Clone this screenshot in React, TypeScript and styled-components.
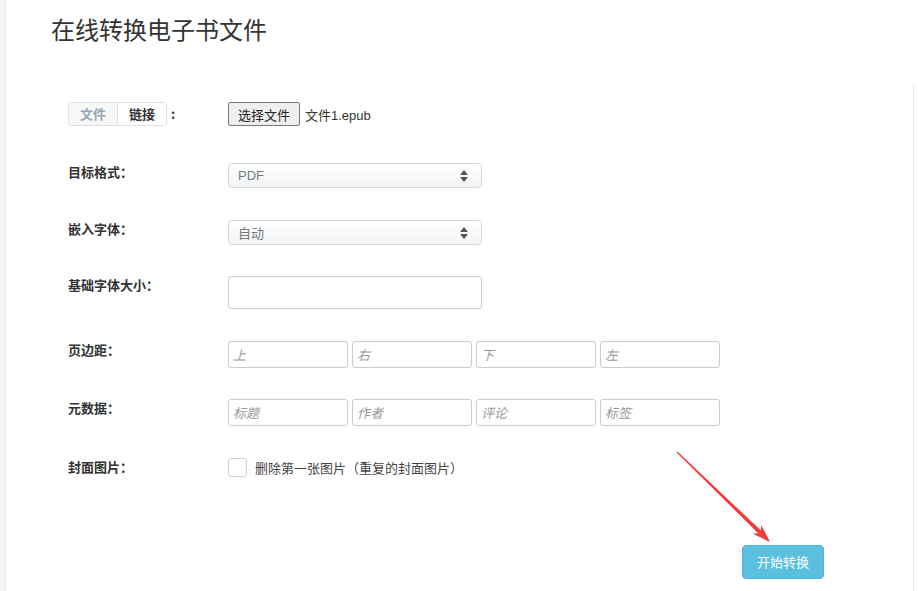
import styled, { createGlobalStyle } from 'styled-components'

const GlobalStyle = createGlobalStyle`
  html, body {
    margin: 0;
    padding: 0;
    background: #ffffff;
  }
  body {
    font-family: "Liberation Sans", "Noto Sans CJK SC", sans-serif;
    color: #333;
  }
`

const Page = styled.div`
  position: relative;
  display: flex;
  width: 923px;
  height: 591px;
  overflow: hidden;
  background: #fff;
`

const SideStrip = styled.div`
  width: 5px;
  flex-shrink: 0;
  background: #f4f4f4;
  border-right: 1px solid #e8e8e8;
`

const Main = styled.main`
  position: relative;
  flex: 1;
  padding: 14px 0 0 45px;
  margin-right: 9px;

  &::after {
    content: '';
    position: absolute;
    right: 0;
    top: 84px;
    bottom: 0;
    width: 1px;
    background: #ececec;
  }
`

const Title = styled.h1`
  margin: 0;
  font-family: "Noto Sans CJK SC", sans-serif;
  font-size: 24px;
  font-weight: 400;
  line-height: 30px;
  color: #333;
`

const Form = styled.form`
  display: flex;
  flex-direction: column;
  gap: 31.6px;
  width: 756px;
  margin: 58px 0 0 17px;
`

const Row = styled.div<{ $first?: boolean }>`
  display: grid;
  grid-template-columns: 160px 1fr;
  align-items: start;
  margin-bottom: ${p => (p.$first ? '5.4px' : '0')};
`

const Label = styled.label`
  font-family: "Noto Sans CJK SC", sans-serif;
  font-size: 13px;
  font-weight: 700;
  line-height: 18px;
  color: #333;
  display: flex;
  align-items: center;
`

const TabGroup = styled.div`
  display: inline-flex;
  border: 1px solid #dde1e6;
  border-radius: 3px;
  overflow: hidden;
  height: 22px;
`

const Tab = styled.span<{ $active?: boolean }>`
  display: flex;
  align-items: center;
  justify-content: center;
  width: 48px;
  font-size: 13px;
  font-weight: 700;
  background: ${p => (p.$active ? '#f5f7f9' : '#fff')};
  color: ${p => (p.$active ? '#9aa6b4' : '#333')};
  & + & {
    border-left: 1px solid #dde1e6;
  }
`

const Colon = styled.span`
  margin-left: 4px;
  font-weight: 700;
`

const FileWrap = styled.div`
  display: flex;
  align-items: center;
  gap: 5px;
  height: 24px;
  font-size: 13px;
`

const FileButton = styled.button`
  height: 24px;
  width: 72px;
  padding: 0;
  font-family: "Noto Sans CJK SC", sans-serif;
  font-size: 13px;
  color: #222;
  background: #efefef;
  border: 1px solid #767676;
  border-radius: 2px;
`

const FileName = styled.span`
  font-family: "Liberation Sans", "Noto Sans CJK SC", sans-serif;
  font-size: 13px;
  color: #333;
`

const SelectBox = styled.div`
  position: relative;
  display: flex;
  align-items: center;
  width: 243px;
  height: 23px;
  padding-left: 9px;
  box-sizing: content-box;
  border: 1px solid #d4d9de;
  border-radius: 4px;
  background: linear-gradient(#ffffff, #f1f3f5);
  font-family: "Liberation Sans", "Noto Sans CJK SC", sans-serif;
  font-size: 13px;
  color: #777;
`

const Arrows = styled.svg`
  position: absolute;
  right: 13px;
  top: 6px;
`

const TextInput = styled.input<{ $w: number; $h: number }>`
  display: block;
  width: ${p => p.$w}px;
  height: ${p => p.$h}px;
  box-sizing: border-box;
  border: 1px solid #cccccc;
  border-radius: 3px;
  padding: 0 4px;
  font-family: "Noto Sans CJK SC", sans-serif;
  font-size: 13px;
  background: #fff;
  outline: none;
  &::placeholder {
    color: #999;
    font-style: italic;
  }
`

const InputRow = styled.div`
  display: flex;
  gap: 4px;
`

const CheckWrap = styled.label`
  display: flex;
  align-items: center;
  gap: 8px;
  height: 19px;
  font-family: "Noto Sans CJK SC", sans-serif;
  font-size: 13px;
  color: #444;
`

const CheckBox = styled.span`
  width: 17px;
  height: 17px;
  border: 1px solid #cfcfcf;
  border-radius: 3px;
  background: #fff;
`

const Footer = styled.div`
  display: flex;
  justify-content: flex-end;
  width: 773px;
  margin-top: 68px;
`

const SubmitButton = styled.button`
  width: 82px;
  height: 34px;
  border: 1px solid #4fb6d6;
  border-radius: 4px;
  background: #5bc0de;
  color: #fff;
  font-family: "Noto Sans CJK SC", sans-serif;
  font-size: 13px;
  padding: 0;
`

const ArrowOverlay = styled.svg`
  position: absolute;
  left: 670px;
  top: 445px;
  pointer-events: none;
`

const SelectArrows = () => (
  <Arrows width="8" height="12" viewBox="0 0 8 12">
    <path d="M4 0 L8 5 L0 5 Z" fill="#555" />
    <path d="M0 7 L8 7 L4 12 Z" fill="#555" />
  </Arrows>
)

export default function App() {
  return (
    <>
      <GlobalStyle />
      <Page>
        <SideStrip />
        <Main>
          <Title>在线转换电子书文件</Title>
          <Form>
            <Row $first>
              <Label>
                <TabGroup>
                  <Tab $active>文件</Tab>
                  <Tab>链接</Tab>
                </TabGroup>
                <Colon>:</Colon>
              </Label>
              <FileWrap>
                <FileButton type="button">选择文件</FileButton>
                <FileName>文件1.epub</FileName>
              </FileWrap>
            </Row>
            <Row>
              <Label>目标格式：</Label>
              <SelectBox>
                PDF
                <SelectArrows />
              </SelectBox>
            </Row>
            <Row>
              <Label>嵌入字体：</Label>
              <SelectBox>
                自动
                <SelectArrows />
              </SelectBox>
            </Row>
            <Row>
              <Label>基础字体大小：</Label>
              <TextInput $w={254} $h={33} />
            </Row>
            <Row>
              <Label>页边距：</Label>
              <InputRow>
                <TextInput $w={120} $h={27} placeholder="上" />
                <TextInput $w={120} $h={27} placeholder="右" />
                <TextInput $w={120} $h={27} placeholder="下" />
                <TextInput $w={120} $h={27} placeholder="左" />
              </InputRow>
            </Row>
            <Row>
              <Label>元数据：</Label>
              <InputRow>
                <TextInput $w={120} $h={27} placeholder="标题" />
                <TextInput $w={120} $h={27} placeholder="作者" />
                <TextInput $w={120} $h={27} placeholder="评论" />
                <TextInput $w={120} $h={27} placeholder="标签" />
              </InputRow>
            </Row>
            <Row>
              <Label>封面图片：</Label>
              <CheckWrap>
                <CheckBox />
                删除第一张图片（重复的封面图片）
              </CheckWrap>
            </Row>
          </Form>
          <Footer>
            <SubmitButton type="button">开始转换</SubmitButton>
          </Footer>
        </Main>
        <ArrowOverlay width="110" height="110" viewBox="0 0 110 110">
          <polygon points="6.6,7.4 7.4,6.6 92,86.5 89.2,89.3" fill="#f23a3a" />
          <polygon points="100,97 82.9,88.8 90.6,87.9 91.3,80.2" fill="#f23a3a" />
        </ArrowOverlay>
      </Page>
    </>
  )
}
